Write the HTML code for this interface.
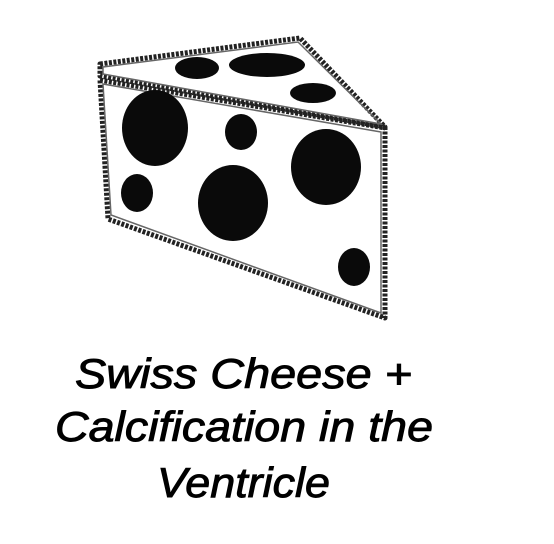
<!DOCTYPE html>
<html><head><style>
html,body{margin:0;padding:0;background:#fff;width:554px;height:544px;overflow:hidden}
</style></head><body>
<svg width="554" height="544" viewBox="0 0 554 544" xmlns="http://www.w3.org/2000/svg">
<g fill="none" stroke="#222" stroke-width="5" stroke-dasharray="3 1.5" stroke-linejoin="round">
<polygon points="100,64 300,38 385,127 100,76"/>
<polygon points="100,80 385,128 385,318 108,219"/>
</g>
<g fill="none" stroke="#666" stroke-width="1.5">
<polygon points="103,67 298,42 381,124 103,74"/>
<polygon points="103,84 381,132 381,313 111,215"/>
</g>
<g fill="#0a0a0a">
<ellipse cx="197" cy="68" rx="22" ry="11"/>
<ellipse cx="267" cy="65" rx="38" ry="12"/>
<ellipse cx="313" cy="93" rx="23" ry="10"/>
<ellipse cx="155" cy="128" rx="33" ry="38"/>
<ellipse cx="241" cy="132" rx="16" ry="18"/>
<ellipse cx="326" cy="167" rx="35" ry="38"/>
<ellipse cx="137" cy="193" rx="16" ry="19"/>
<ellipse cx="233" cy="203" rx="35" ry="38"/>
<ellipse cx="354" cy="267" rx="16" ry="19"/>
</g>
<g font-family="Liberation Sans, sans-serif" font-style="italic" font-size="42" fill="#000" stroke="#000" stroke-width="0.9">
<text x="75" y="388" textLength="337" lengthAdjust="spacingAndGlyphs">Swiss Cheese +</text>
<text x="55" y="441" textLength="378" lengthAdjust="spacingAndGlyphs">Calcification in the</text>
<text x="157" y="497" textLength="173" lengthAdjust="spacingAndGlyphs">Ventricle</text>
</g>
</svg>
</body></html>
